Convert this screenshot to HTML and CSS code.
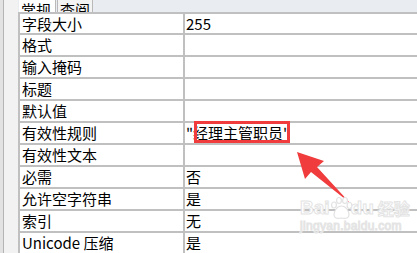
FILE: index.html
```html
<!DOCTYPE html>
<html>
<head>
    <meta charset="utf-8">
    <title>字段属性</title>
    <link rel="stylesheet" href="styles.css">
</head>
<body>
    <div class="window">
        <div class="gutter"></div>
        <div class="main">
            <div class="tabs">
                <span class="tab tab-active">常规</span>
                <span class="tab">查阅</span>
            </div>
            <div class="sheet">
                <div class="label">字段大小</div><div class="value">255</div>
                <div class="label">格式</div><div class="value"></div>
                <div class="label">输入掩码</div><div class="value"></div>
                <div class="label">标题</div><div class="value"></div>
                <div class="label">默认值</div><div class="value"></div>
                <div class="label">有效性规则</div>
                <div class="value value-rule">"经理主管职员"<span class="mark"></span></div>
                <div class="label">有效性文本</div><div class="value"></div>
                <div class="label">必需</div><div class="value">否</div>
                <div class="label">允许空字符串</div><div class="value">是</div>
                <div class="label">索引</div><div class="value">无</div>
                <div class="label">Unicode 压缩</div><div class="value">是</div>
            </div>
        </div>

        <svg class="arrow" width="417" height="253" viewBox="0 0 417 253">
            <polygon points="297,152 324,161 317,167 350,203 311,172 305,179" fill="#f03c3c"/>
        </svg>

        <div class="watermark">
            <div class="wm-logo">
                <span>Bai</span>
                <svg class="paw" width="24" height="24" viewBox="0 0 24 24">
                    <g fill="#fff" stroke="#e2e2e2" stroke-width="1.2">
                        <ellipse cx="5" cy="9" rx="2.4" ry="3"/>
                        <ellipse cx="10" cy="4.5" rx="2.4" ry="3"/>
                        <ellipse cx="16" cy="4.5" rx="2.4" ry="3"/>
                        <ellipse cx="20.5" cy="9.5" rx="2.4" ry="3"/>
                        <path d="M12.5 10 C8 10 5 15 5 19 C5 22 8 23 12.5 22 C17 23 20 22 20 19 C20 15 17 10 12.5 10 Z"/>
                    </g>
                </svg>
                <span>du</span>
                <span class="wm-cn">经验</span>
            </div>
            <div class="wm-url">jingyan.baidu.com</div>
        </div>
    </div>
</body>
</html>
```

FILE: styles.css
```css
body{
    margin: 0;
    background-color: #ffffff;
    font-family: "Noto Sans CJK SC", "Noto Sans", sans-serif;
    font-size: 15px;
    color: #000000;
    overflow: hidden;
}

.window{
    position: relative;
    display: flex;
    width: 417px;
    height: 253px;
    overflow: hidden;
}

.gutter{
    width: 15px;
    flex-shrink: 0;
    background-color: #f2f2f2;
    border-left: 3px solid #e2e2e2;
    box-shadow: inset 1px 0 0 #b4b4b4;
}

.main{
    flex: 1;
    display: flex;
    flex-direction: column;
    background-color: #e9ecf0;
}

.tabs{
    height: 13px;
    display: flex;
    padding-left: 1px;
    overflow: hidden;
}

.tab{
    display: block;
    height: 13px;
    line-height: 20px;
    padding: 0 2px;
    margin-top: -9px;
    padding-top: 9px;
    border-right: 1px solid #b9b9b9;
    background-color: #f3f3f3;
}

.tab-active{
    background-color: #ffffff;
    width: 32px;
}

.tab + .tab{
    border-left: 1px solid #b9b9b9;
    margin-left: 1px;
}

.sheet{
    display: grid;
    grid-template-columns: 163px 1fr;
    grid-template-rows: 19px;
    grid-auto-rows: 20px;
    gap: 2px;
    background-color: #c0c0c0;
    border-left: 2px solid #c0c0c0;
    border-top: 2px solid #c0c0c0;
    flex: 1;
}

.label,
.value{
    background-color: #ffffff;
    line-height: 20px;
    white-space: nowrap;
    overflow: hidden;
}

.label{
    padding-left: 2px;
}

.value{
    padding-left: 1px;
}

.value-rule{
    position: relative;
    overflow: visible;
}

.mark{
    position: absolute;
    left: 9px;
    top: -2px;
    width: 90px;
    height: 16px;
    border: 3px solid #f03c3c;
}

.arrow{
    position: absolute;
    left: 0;
    top: 0;
    pointer-events: none;
}

.watermark{
    position: absolute;
    left: 300px;
    top: 196px;
    color: #ffffff;
    font-family: "Liberation Sans", Arial, sans-serif;
    -webkit-text-stroke: 1px #e4e4e4;
    pointer-events: none;
}

.wm-logo{
    display: flex;
    align-items: flex-end;
    font-size: 19px;
    font-weight: 700;
    line-height: 20px;
}

.paw{
    margin: 0 -2px -2px -1px;
    align-self: flex-start;
}

.wm-cn{
    margin-left: 4px;
    font-family: "Noto Sans CJK SC", sans-serif;
    font-size: 16px;
}

.wm-url{
    font-size: 12px;
    line-height: 14px;
    margin-top: 1px;
    letter-spacing: 0.3px;
}
```
